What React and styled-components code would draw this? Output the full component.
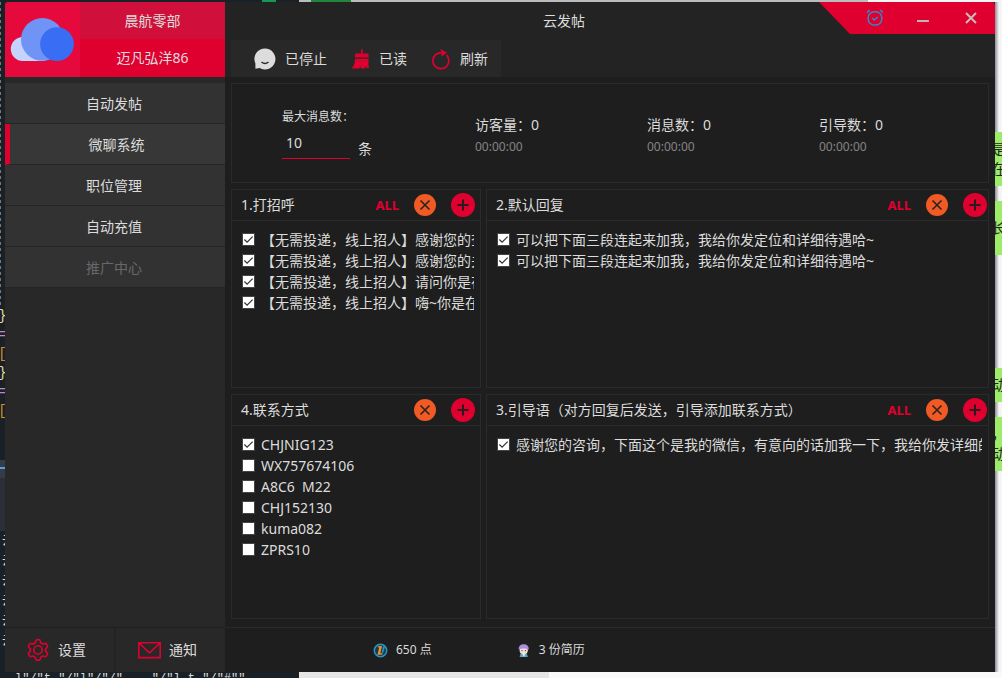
import React from "react";
import styled, { createGlobalStyle } from "styled-components";

const redColor = "#e00030";
const orangeColor = "#f15a24";
const textColor = "#dcdcdc";
const lineColor = "#2a2a2a";
const darkColor = "#1e1e1e";
const sideColor = "#282828";
const tick = "url(\"data:image/svg+xml,%3Csvg xmlns='http://www.w3.org/2000/svg' viewBox='0 0 12 12'%3E%3Cpath d='M1.5 6l3 3L10.5 2.8' fill='none' stroke='%23333' stroke-width='1.3'/%3E%3C/svg%3E\")";

const GlobalStyle = createGlobalStyle`
    * {
        box-sizing: border-box;
    }
    body {
        margin: 0;
        color: ${textColor};
        font-family: "Noto Sans", "Noto Sans CJK SC", sans-serif;
        font-size: 14px;
        line-height: 20px;
    }
    button, input {
        font: inherit;
        color: inherit;
        margin: 0;
        padding: 0;
        border: 0;
        background: none;
    }
    button {
        cursor: pointer;
    }
    svg {
        display: block;
        flex: none;
    }
`

/* desktop behind the window */
const Desktop = styled.div`
    display: grid;
    grid-template-columns: 5px minmax(0, 1fr) 7px;
    grid-template-rows: 2px minmax(0, 1fr) 6px;
    height: 100vh;
    min-height: 560px;
    overflow: hidden;
    background: #1a2126;
`
const TopEdge = styled.div`
    grid-column: 1 / -1;
    background: linear-gradient(90deg, #1a2126 262px, #149a50 262px 276px, #1a2126 276px 299px, #b9bdc0 299px 311px, #22863a 311px 351px, #b9bdc0 351px 868px, #f5f5f5 868px);
`
const LeftEdge = styled.div`
    overflow: hidden;
    background: linear-gradient(#1a2126 458px, #333c48 458px 465px, #5a9fd8 465px 467px, #333c48 467px 476px, #2b2f38 476px 529px, #1a2126 529px);
`
const DashLine = styled.div`
    width: 1px;
    height: 305px;
    background: repeating-linear-gradient(#777777 0 3px, #1a2126 3px 6px);
`
const CodeLine = styled.div`
    height: 19px;
    line-height: 19px;
    font-family: "Liberation Mono", monospace;
    color: ${props => props.$color};
    display: flex;
    justify-content: center;
`
const CodeGap = styled.div`
    height: 110px;
`
const NoteLine = styled.div`
    height: 20px;
    padding-left: 2px;
    font-size: 12px;
    white-space: nowrap;
`
const RightEdge = styled.div`
    overflow: hidden;
    background: linear-gradient(90deg, #8c9096, #f5f5f5 4px);
    padding-top: 130px;
`
const Bubble = styled.div`
    height: ${props => props.$height}px;
    margin-bottom: 15px;
    background: #9eea6a;
    color: #222222;
    display: flex;
    flex-direction: column;
    align-items: center;
    justify-content: center;
`
const BubbleGap = styled.div`
    height: 98px;
`
const BottomEdge = styled.div`
    grid-column: 1 / -1;
    overflow: hidden;
    padding-left: 15px;
    font-family: "Liberation Mono", monospace;
    font-size: 12px;
    line-height: 14px;
    white-space: pre;
    background: linear-gradient(90deg, #1a2126 299px, #e6e6e6 299px 549px, #fafafa 549px);
`

const Window = styled.div`
    display: grid;
    grid-template-columns: 220px minmax(0, 1fr);
    background: ${darkColor};
    border-radius: 3px 3px 0 0;
    overflow: hidden;
`

/* sidebar */
const Sidebar = styled.aside`
    display: flex;
    flex-direction: column;
    background: ${sideColor};
`
const Account = styled.div`
    display: grid;
    grid-template-columns: 75px 1fr;
    grid-template-rows: 37px 38px;
    margin-bottom: 6px;
`
const LogoBox = styled.div`
    grid-row: 1 / 3;
    background: #e60a3c;
`
const AccountName = styled.div`
    display: flex;
    align-items: center;
    justify-content: center;
    background: ${props => props.$company ? "#d0103a" : redColor};
`
const Nav = styled.nav`
    display: flex;
    flex-direction: column;
    flex: 1;
`
const NavButton = styled.button`
    height: 41px;
    padding: 2px 2px 0 0;
    text-align: center;
    background: ${props => props.$active ? "#373737" : "#323232"};
    border-bottom: 1px solid #252525;
    border-left: ${props => props.$active ? `5px solid ${redColor}` : "0"};
    &:disabled {
        color: #686868;
    }
`
const SideFooter = styled.div`
    display: grid;
    grid-template-columns: 1fr 1fr;
    gap: 2px;
    height: 45px;
    border-top: 1px solid ${darkColor};
    background: #232323;
`
const SideButton = styled.button`
    display: flex;
    align-items: center;
    gap: 8px;
    padding-left: 22px;
    background: ${sideColor};
`

/* right side */
const Main = styled.main`
    display: flex;
    flex-direction: column;
    min-width: 0;
`
const Header = styled.header`
    height: 75px;
    background: #232323;
`
const TitleBar = styled.div`
    display: flex;
    height: 38px;
`
const Title = styled.h1`
    flex: 1;
    margin: 0;
    padding-left: 84px;
    text-align: center;
    font-size: 14px;
    font-weight: 400;
    line-height: 38px;
`
const WindowControls = styled.div`
    display: flex;
    height: 32px;
    padding-left: 32px;
    background: ${redColor};
    clip-path: polygon(0 0, 100% 0, 100% 100%, 31px 100%);
`
const ControlButton = styled.button`
    display: flex;
    align-items: center;
    justify-content: center;
    width: 48px;
`
const Toolbar = styled.div`
    display: flex;
    align-items: center;
    gap: 24px;
    width: 270px;
    height: 37px;
    margin-left: 6px;
    padding-left: 23px;
    background: ${sideColor};
`
const ToolButton = styled.button`
    display: flex;
    align-items: center;
    gap: 9px;
`
const Content = styled.div`
    flex: 1;
    min-height: 0;
    display: grid;
    grid-template-columns: 250px minmax(0, 1fr);
    grid-template-rows: 100px minmax(0, 199fr) minmax(0, 225fr);
    gap: 6px 5px;
    padding: 6px 6px 8px;
`
const StatsPanel = styled.section`
    grid-column: 1 / -1;
    display: grid;
    grid-template-columns: 193px 172px 172px 1fr;
    align-items: center;
    padding-left: 50px;
    border: 1px solid ${lineColor};
`
const LimitField = styled.div`
    display: grid;
    grid-template-columns: 68px 1fr;
    column-gap: 8px;
`
const LimitLabel = styled.label`
    grid-column: 1 / -1;
    font-size: 12px;
`
const LimitInput = styled.input`
    width: 100%;
    height: 32px;
    padding: 0 4px;
    border-bottom: 1px solid ${redColor};
    outline: 0;
`
const LimitUnit = styled.span`
    align-self: end;
`
const Stat = styled.div`
    padding-top: 4px;
`
const StatName = styled.div`
    line-height: 24px;
`
const StatTime = styled.div`
    font-size: 12px;
    color: #858585;
`

const Panel = styled.section`
    display: flex;
    flex-direction: column;
    min-width: 0;
    border: 1px solid ${lineColor};
`
const PanelHeader = styled.div`
    display: flex;
    align-items: center;
    gap: 15px;
    height: 31px;
    padding: 0 ${props => props.$wide ? 1 : 5}px 0 9px;
    border-bottom: 1px solid ${lineColor};
`
const PanelTitle = styled.h2`
    flex: 1;
    margin: 0;
    font-size: 14px;
    font-weight: 400;
    white-space: nowrap;
`
const AllButton = styled.button`
    color: ${redColor};
    font-size: 13px;
    font-weight: 700;
`
const RoundButton = styled.button`
    display: flex;
    align-items: center;
    justify-content: center;
    flex: none;
    width: ${props => props.$size}px;
    height: ${props => props.$size}px;
    border-radius: 50%;
    background: ${props => props.$color};
`
const List = styled.ul`
    list-style: none;
    margin: 0;
    padding: 8px 6px 8px 10px;
    overflow: hidden;
`
const Row = styled.li`
    height: 21px;
    overflow: hidden;
`
const RowLabel = styled.label`
    display: flex;
    align-items: center;
    gap: 6px;
    line-height: 21px;
    white-space: pre;
`
const Check = styled.input`
    appearance: none;
    flex: none;
    width: 13px;
    height: 13px;
    border: 1px solid #444444;
    background: #ffffff;
    &:checked {
        background: #ffffff ${tick} center / 11px no-repeat;
    }
`
const StatusBar = styled.footer`
    display: flex;
    align-items: center;
    gap: 84px;
    height: 45px;
    padding-left: 148px;
    border-top: 1px solid ${lineColor};
    font-size: 12px;
`
const StatusItem = styled.div`
    display: flex;
    align-items: center;
    gap: 8px;
`

// six soft teeth, one of them pointing up
const gearPath = Array.from({ length: 120 }, (_, i) => {
    const a = (i / 120) * Math.PI * 2;
    const r = 9 + 1.3 * Math.max(-1, Math.min(1, -Math.cos(6 * a) * 1.7));
    return `${i ? "L" : "M"}${(11 + r * Math.cos(a)).toFixed(2)} ${(11 + r * Math.sin(a)).toFixed(2)}`;
}).join("") + "Z";

const CloudLogo = () => (
    <svg width="75" height="75" viewBox="0 0 75 75">
        <path d="M17.8 35a12 12 0 0 0 0 24H40V35z" fill="#c4d4fc"/>
        <circle cx="37.4" cy="37.4" r="21.4" fill="#7094f5"/>
        <circle cx="52" cy="42.1" r="16.9" fill="#386df4"/>
    </svg>
)
const GearIcon = () => (
    <svg width="23" height="22" fill="none" stroke={redColor} strokeWidth="1.6">
        <path d={gearPath}/>
        <circle cx="11" cy="11" r="4.2"/>
    </svg>
)
const MailIcon = () => (
    <svg width="23" height="18" fill="none" stroke={redColor} strokeWidth="1.6">
        <path d="M.8 1.8h21.4v14.8H.8zM1 2l10.5 9.8L22 2"/>
    </svg>
)
const ChatIcon = () => (
    <svg width="22" height="22">
        <path d="M11 .5a10.5 10.5 0 1 1-5.3 19.6L1.4 20.8V15.5A10.5 10.5 0 0 1 11 .5z" fill="#dcdcdc"/>
        <path d="M7.5 14q3.5 3 7 0" fill="none" stroke="#282828" strokeWidth="1.3"/>
    </svg>
)
const BroomIcon = () => (
    <svg width="19" height="22" fill={redColor}>
        <path d="M10 1.8q.8-1.6 1.6 0V5.5h5q1 0 1 1v3H4v-3q0-1 1-1h5z"/>
        <path d="M4 10.8h13.6q-.6 5 .4 9.2l-2.8.4.5-3-2.2 3H9.6l.7-2.4-2.2 2.4H.6Q4.2 17 4 10.8z"/>
    </svg>
)
const RefreshIcon = () => (
    <svg width="20" height="22">
        <path d="M15.7 7.2A8 8 0 1 1 4.6 6.7Q7 4.8 10 4.8" fill="none" stroke={redColor} strokeWidth="1.7"/>
        <path d="M9.5 1l6.5 3.7-5.5 3.7V5.5z" fill={redColor}/>
    </svg>
)
const AlarmIcon = () => (
    <svg width="18" height="18" fill="none" stroke="#3584c8" strokeWidth="1.5">
        <rect x="2.2" y="2.7" width="13.6" height="13.4" rx="6"/>
        <path d="M1.3 3.8Q1.8 1.8 4 1.3M16.7 3.8Q16.2 1.8 14 1.3M6.2 9.2l2.2 1.8 3.4-3"/>
    </svg>
)
const MinimizeIcon = () => (
    <svg width="12" height="12">
        <path d="M0 9h12" stroke="#c0b4b4" strokeWidth="2"/>
    </svg>
)
const CloseIcon = () => (
    <svg width="12" height="12">
        <path d="M1 1l10 10M11 1L1 11" stroke="#c8bcbc" strokeWidth="2"/>
    </svg>
)
const CrossIcon = () => (
    <svg width="12" height="12">
        <path d="M1.5 1.5l9 9M10.5 1.5l-9 9" stroke="#2b2320" strokeWidth="1.6"/>
    </svg>
)
const PlusIcon = () => (
    <svg width="12" height="12">
        <path d="M6 .5v11M.5 6h11" stroke="#2b1a20" strokeWidth="2"/>
    </svg>
)
const CoinIcon = () => (
    <svg width="15" height="15">
        <circle cx="7.5" cy="7.5" r="6.2" fill="#163a4a" stroke="#2697c8" strokeWidth="1.5"/>
        <path d="M10 3.5h2L10.5 9l-2 2z" fill="#2697c8"/>
        <path d="M5.5 3h3.6L7.3 10.2h2.4l-.7 1.6H4.4L6.2 4.6H4.7z" fill="#f08a28"/>
    </svg>
)
const PersonIcon = () => (
    <svg width="15" height="15">
        <path d="M3.6 14l1-3.4h6.2l1 3.4z" fill="#55a9c4"/>
        <path d="M6.3 10.5h3L7.8 14z" fill="#f4f4f4"/>
        <circle cx="7.7" cy="7.2" r="4.1" fill="#f4ddd6"/>
        <path d="M2.6 6.6Q2.4 1.3 7.7 1.2q5.3.1 5.1 5.4Q7.7 4.2 2.6 6.6z" fill="#a890dc"/>
        <path d="M6 7v1.2M9.4 7v1.2" stroke="#443a4a" strokeWidth="1"/>
    </svg>
)

const navItems = [
    { name: "自动发帖" },
    { name: "微聊系统", active: true },
    { name: "职位管理" },
    { name: "自动充值" },
    { name: "推广中心", disabled: true },
];
const stats = ["访客量：0", "消息数：0", "引导数：0"];
const panels = [
    {
        title: "1.打招呼",
        all: true,
        rows: [
            ["【无需投递，线上招人】感谢您的查看", true],
            ["【无需投递，线上招人】感谢您的关注", true],
            ["【无需投递，线上招人】请问你是在找", true],
            ["【无需投递，线上招人】嗨~你是在找", true],
        ],
    },
    {
        title: "2.默认回复",
        all: true,
        wide: true,
        rows: [
            ["可以把下面三段连起来加我，我给你发定位和详细待遇哈~", true],
            ["可以把下面三段连起来加我，我给你发定位和详细待遇哈~", true],
        ],
    },
    {
        title: "4.联系方式",
        rows: [
            ["CHJNIG123", true],
            ["WX757674106", false],
            ["A8C6  M22", false],
            ["CHJ152130", false],
            ["kuma082", false],
            ["ZPRS10", false],
        ],
    },
    {
        title: "3.引导语（对方回复后发送，引导添加联系方式）",
        all: true,
        wide: true,
        rows: [
            ["感谢您的咨询，下面这个是我的微信，有意向的话加我一下，我给你发详细的", true],
        ],
    },
];

const MessagePanel = ({ title, all, wide, rows }) => {
    return(
        <Panel>
            <PanelHeader $wide={wide}>
                <PanelTitle>{title}</PanelTitle>
                {all && <AllButton type="button">ALL</AllButton>}
                <RoundButton type="button" $size={22} $color={orangeColor} aria-label="删除"><CrossIcon/></RoundButton>
                <RoundButton type="button" $size={24} $color={redColor} aria-label="添加"><PlusIcon/></RoundButton>
            </PanelHeader>
            <List>
                {rows.map(([text, checked], i) => (
                    <Row key={i}>
                        <RowLabel><Check type="checkbox" defaultChecked={checked}/>{text}</RowLabel>
                    </Row>
                ))}
            </List>
        </Panel>
    )
}

const App = () => {
    return(
        <Desktop lang="zh-CN">
            <GlobalStyle/>
            <TopEdge/>
            <LeftEdge aria-hidden="true">
                <DashLine/>
                <CodeLine $color="#e8d9a0">{"}"}</CodeLine>
                <CodeLine $color="#c586c0">=</CodeLine>
                <CodeLine $color="#d08a30">[</CodeLine>
                <CodeLine $color="#e8d9a0">{"}"}</CodeLine>
                <CodeLine $color="#c586c0">=</CodeLine>
                <CodeLine $color="#d08a30">[</CodeLine>
                <CodeGap/>
                <NoteLine>云</NoteLine>
                <NoteLine>云</NoteLine>
                <NoteLine>云</NoteLine>
                <NoteLine>云</NoteLine>
                <NoteLine>云</NoteLine>
                <NoteLine>云</NoteLine>
            </LeftEdge>
            <Window>
                <Sidebar>
                    <Account>
                        <LogoBox><CloudLogo/></LogoBox>
                        <AccountName $company>晨航零部</AccountName>
                        <AccountName>迈凡弘洋86</AccountName>
                    </Account>
                    <Nav>
                        {navItems.map(item => (
                            <NavButton key={item.name} type="button" $active={item.active} disabled={item.disabled}>{item.name}</NavButton>
                        ))}
                    </Nav>
                    <SideFooter>
                        <SideButton type="button"><GearIcon/>设置</SideButton>
                        <SideButton type="button"><MailIcon/>通知</SideButton>
                    </SideFooter>
                </Sidebar>
                <Main>
                    <Header>
                        <TitleBar>
                            <Title>云发帖</Title>
                            <WindowControls>
                                <ControlButton type="button" aria-label="定时"><AlarmIcon/></ControlButton>
                                <ControlButton type="button" aria-label="最小化"><MinimizeIcon/></ControlButton>
                                <ControlButton type="button" aria-label="关闭"><CloseIcon/></ControlButton>
                            </WindowControls>
                        </TitleBar>
                        <Toolbar>
                            <ToolButton type="button"><ChatIcon/>已停止</ToolButton>
                            <ToolButton type="button"><BroomIcon/>已读</ToolButton>
                            <ToolButton type="button"><RefreshIcon/>刷新</ToolButton>
                        </Toolbar>
                    </Header>
                    <Content>
                        <StatsPanel>
                            <LimitField>
                                <LimitLabel htmlFor="limit">最大消息数：</LimitLabel>
                                <LimitInput id="limit" type="text" defaultValue="10"/>
                                <LimitUnit>条</LimitUnit>
                            </LimitField>
                            {stats.map(name => (
                                <Stat key={name}>
                                    <StatName>{name}</StatName>
                                    <StatTime>00:00:00</StatTime>
                                </Stat>
                            ))}
                        </StatsPanel>
                        {panels.map(panel => <MessagePanel key={panel.title} {...panel}/>)}
                    </Content>
                    <StatusBar>
                        <StatusItem><CoinIcon/>650 点</StatusItem>
                        <StatusItem><PersonIcon/>3 份简历</StatusItem>
                    </StatusBar>
                </Main>
            </Window>
            <RightEdge aria-hidden="true">
                <Bubble $height={54}><span>是</span><span>在</span></Bubble>
                <Bubble $height={54}><span>长</span></Bubble>
                <BubbleGap/>
                <Bubble $height={34}><span>动</span></Bubble>
                <Bubble $height={54}><span>，</span><span>动</span></Bubble>
            </RightEdge>
            <BottomEdge aria-hidden="true">{'l"/"t."/"l"/"/"...."/"l.t."/"#""'}</BottomEdge>
        </Desktop>
    )
}

export default App;
